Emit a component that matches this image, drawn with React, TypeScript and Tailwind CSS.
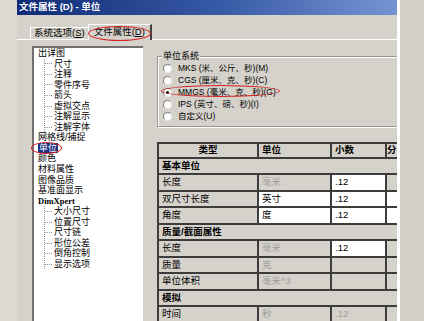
import React from 'react'

const cjk = "font-['Liberation_Sans','Noto_Sans_CJK_SC',sans-serif]"

type Node = { label: string; children?: string[]; selected?: boolean; serif?: boolean }

const tree: Node[] = [
  { label: '出详图', children: ['尺寸', '注释', '零件序号', '箭头', '虚拟交点', '注解显示', '注解字体'] },
  { label: '网格线/捕捉' },
  { label: '单位', selected: true },
  { label: '颜色' },
  { label: '材料属性' },
  { label: '图像品质' },
  { label: '基准面显示' },
  { label: 'DimXpert', serif: true, children: ['大小尺寸', '位置尺寸', '尺寸链', '形位公差', '倒角控制', '显示选项'] },
]

const radios = [
  { label: 'MKS (米、公斤、秒)(M)', key: 'M' },
  { label: 'CGS (厘米、克、秒)(C)', key: 'C' },
  { label: 'MMGS (毫米、克、秒)(G)', key: 'G', checked: true },
  { label: 'IPS (英寸、磅、秒)(I)', key: 'I' },
  { label: '自定义(U)', key: 'U' },
]

type Row =
  | { section: string }
  | { name: string; unit: string; unitOn?: boolean; dec?: string; decOn?: boolean; fracOn?: boolean }

const rows: Row[] = [
  { section: '基本单位' },
  { name: '长度', unit: '毫米', dec: '.12', decOn: true },
  { name: '双尺寸长度', unit: '英寸', unitOn: true, dec: '.12', decOn: true, fracOn: true },
  { name: '角度', unit: '度', unitOn: true, dec: '.12', decOn: true, fracOn: true },
  { section: '质量/截面属性' },
  { name: '长度', unit: '毫米', dec: '.12', decOn: true },
  { name: '质量', unit: '克' },
  { name: '单位体积', unit: '毫米^3' },
  { section: '模拟' },
  { name: '时间', unit: '秒', dec: '.12' },
]

function Radio({ checked }: { checked?: boolean }) {
  return (
    <span className="flex h-[9px] w-[9px] shrink-0 items-center justify-center rounded-full border border-t-[#808080] border-l-[#808080] border-r-[#e8e8e8] border-b-[#e8e8e8] bg-white">
      {checked && <span className="h-[3px] w-[3px] rounded-full bg-black" />}
    </span>
  )
}

function UnitTable() {
  const cell = 'h-full flex items-center border-r-2 border-b-2 border-[#3c3c3c] px-[3px] overflow-hidden whitespace-nowrap'
  const cols = 'grid-cols-[100px_73px_55px_20px]'
  return (
    <div className={`w-[250px] border-t-2 border-l-2 border-[#3c3c3c] text-[9.5px] ${cjk}`}>
      <div className={`grid h-[15px] ${cols} bg-[#d5d2cb] font-bold`}>
        <div className={`${cell} justify-center`}>类型</div>
        <div className={cell}>单位</div>
        <div className={cell}>小数</div>
        <div className={`${cell} !px-0`}>分</div>
      </div>
      {rows.map((r, i) =>
        'section' in r ? (
          <div key={i} className={`${cell} h-[16.5px] bg-[#d5d2cb] font-bold`}>
            {r.section}
          </div>
        ) : (
          <div key={i} className={`grid h-[16.5px] ${cols}`}>
            <div className={`${cell} bg-[#d5d2cb]`}>{r.name}</div>
            <div className={`${cell} ${r.unitOn ? 'bg-white text-black' : 'bg-[#d5d2cb] text-[#a09d98]'}`}>{r.unit}</div>
            <div className={`${cell} ${r.decOn ? 'bg-white text-black' : 'bg-[#d5d2cb] text-[#a09d98]'}`}>{r.dec}</div>
            <div className={`${cell} ${r.fracOn ? 'bg-white' : 'bg-[#d5d2cb]'}`} />
          </div>
        )
      )}
    </div>
  )
}

export default function App() {
  return (
    <div className={`flex h-[321px] w-[424px] overflow-hidden bg-[#d4d1cb] ${cjk} text-black`}>
      <div className="w-[17px] shrink-0 bg-[#dcd9d3]" />

      <div className="flex w-[380px] shrink-0 flex-col overflow-hidden bg-[#d5d2cb]">
        <div className="flex h-[15px] shrink-0 items-center bg-gradient-to-r from-[#102c76] via-[#3556a3] to-[#7494d2] pl-[2px] text-[9.5px] font-bold text-white">
          文件属性 (D) - 单位
        </div>

        {/* tabs */}
        <div className="flex h-[24px] shrink-0 items-end pl-[13px]">
          <div className="flex h-[12px] items-center border-t border-l border-white px-[3px] text-[9.5px]">
            系统选项(<span className="underline">S</span>)
          </div>
          <div className="relative -mb-px flex h-[16px] items-center border-t border-l border-r-2 border-white border-r-[#404040] bg-[#d5d2cb] px-[5px] text-[9.5px]">
            文件属性(<span className="underline">D</span>)
            <span className="pointer-events-none absolute -left-[1px] -right-[1px] top-[1px] h-[15px] rounded-[50%] border-[1.5px] border-[#d42020]" />
          </div>
        </div>

        {/* page */}
        <div className="flex flex-1 border-t border-white pl-[15px]">
          <div className="mt-[6px] w-[111px] shrink-0 border-t-2 border-l-2 border-t-[#707070] border-l-[#707070] bg-white pl-[4px] text-[9px] leading-[10.55px]">
            {tree.map((n) => (
              <div key={n.label}>
                <div className="flex h-[10.55px] items-center">
                  {n.selected ? (
                    <span className="relative bg-[#1a2f80] px-px text-white">
                      {n.label}
                      <span className="pointer-events-none absolute -left-[7px] -right-[4px] -top-[1px] h-[12px] rounded-[50%] border-[1.5px] border-[#d42020]" />
                    </span>
                  ) : n.serif ? (
                    <span className="font-['Liberation_Serif',serif] text-[8.5px] font-bold">{n.label}</span>
                  ) : (
                    n.label
                  )}
                </div>
                {n.children && (
                  <div className="ml-[6px] border-l border-dotted border-[#909090]">
                    {n.children.map((c) => (
                      <div key={c} className="flex h-[10.55px] items-center">
                        <span className="mr-[2px] w-[7px] border-t border-dotted border-[#909090]" />
                        {c}
                      </div>
                    ))}
                  </div>
                )}
              </div>
            ))}
          </div>

          <div className="ml-[14px] flex w-[280px] shrink-0 flex-col pt-[16px]">
            <div className="relative h-[71px] border border-[#9a978f] shadow-[inset_1px_1px_0_#fff,1px_1px_0_#fff] pl-[5px] pt-[5px]">
              <span className="absolute -top-[7px] left-[4px] bg-[#d5d2cb] px-px text-[9px]">单位系统</span>
              {radios.map((r) => (
                <div key={r.key} className="flex h-[12.2px] items-center gap-[6px] text-[8.5px]">
                  <Radio checked={r.checked} />
                  <span className={r.checked ? 'relative' : ''}>
                    {r.label}
                    {r.checked && (
                      <span className="pointer-events-none absolute -left-[17px] -right-[4px] -top-[1px] h-[12px] rounded-[50%] border-[1.5px] border-[#d42020]" />
                    )}
                  </span>
                </div>
              ))}
            </div>
            <div className="mt-[15px]">
              <UnitTable />
            </div>
          </div>
        </div>
      </div>

      <div className="w-[3px] shrink-0 bg-white" />
      <div className="flex-1 bg-[#d4d1cb]" />
    </div>
  )
}
